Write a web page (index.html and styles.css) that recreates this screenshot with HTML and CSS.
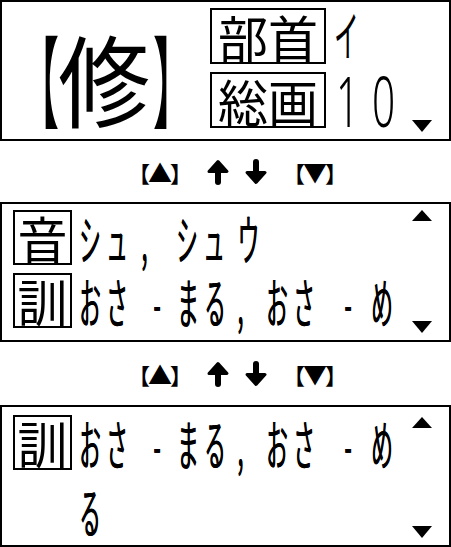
FILE: index.html
```html
<!DOCTYPE html>
<html lang="ja">
<head>
<meta charset="utf-8">
<title>修</title>
<link rel="stylesheet" href="styles.css">
</head>
<body>
<main class="screen">
  <section class="panel head">
    <div class="kanji">
      <span class="br br-open"><span class="br-glyph">【</span></span>
      <span class="big"><span class="big-glyph">修</span></span>
      <span class="br br-close"><span class="br-glyph">】</span></span>
    </div>
    <div class="info">
      <div class="info-row">
        <span class="tag tag-wide">部首</span>
        <span class="val radical">イ</span>
      </div>
      <div class="info-row">
        <span class="tag tag-wide">総画</span>
        <span class="val strokes">1 0</span>
      </div>
    </div>
    <div class="scroll scroll-head"><span class="tri tri-down"></span></div>
  </section>

  <div class="keys">
    <span class="key"><span class="kb">【</span><span class="kt"><span>▲</span></span><span class="kb">】</span></span>
    <svg class="arrow arrow-up" viewBox="0 0 24 26" width="24" height="26" aria-hidden="true"><path d="M12 23V10" fill="none" stroke="#000" stroke-width="6" stroke-linecap="round"/><path d="M12 2.5L21 12.5H3Z" fill="#000" stroke="#000" stroke-width="3" stroke-linejoin="round"/></svg>
    <svg class="arrow arrow-down" viewBox="0 0 24 26" width="24" height="26" aria-hidden="true"><path d="M12 3V16" fill="none" stroke="#000" stroke-width="6" stroke-linecap="round"/><path d="M12 23.5L21 13.5H3Z" fill="#000" stroke="#000" stroke-width="3" stroke-linejoin="round"/></svg>
    <span class="key"><span class="kb">【</span><span class="kt"><span>▼</span></span><span class="kb">】</span></span>
  </div>

  <section class="panel list">
    <div class="entries">
      <div class="entry">
        <span class="tag tag-sq">音</span>
        <span class="reading"><span>シュ</span><span class="sep comma-a">, </span><span>シュ</span><span class="kana-u">ウ</span></span>
      </div>
      <div class="entry">
        <span class="tag tag-sq">訓</span>
        <span class="reading"><span>おさ</span><span class="sep dash-a">-</span><span>まる</span><span class="sep comma-b">, </span><span>おさ</span><span class="sep dash-b">-</span><span>め</span></span>
      </div>
    </div>
    <div class="scroll"><span class="tri tri-up"></span><span class="tri tri-down"></span></div>
  </section>

  <div class="keys keys-low">
    <span class="key"><span class="kb">【</span><span class="kt"><span>▲</span></span><span class="kb">】</span></span>
    <svg class="arrow arrow-up" viewBox="0 0 24 26" width="24" height="26" aria-hidden="true"><path d="M12 23V10" fill="none" stroke="#000" stroke-width="6" stroke-linecap="round"/><path d="M12 2.5L21 12.5H3Z" fill="#000" stroke="#000" stroke-width="3" stroke-linejoin="round"/></svg>
    <svg class="arrow arrow-down" viewBox="0 0 24 26" width="24" height="26" aria-hidden="true"><path d="M12 3V16" fill="none" stroke="#000" stroke-width="6" stroke-linecap="round"/><path d="M12 23.5L21 13.5H3Z" fill="#000" stroke="#000" stroke-width="3" stroke-linejoin="round"/></svg>
    <span class="key"><span class="kb">【</span><span class="kt"><span>▼</span></span><span class="kb">】</span></span>
  </div>

  <section class="panel list list-last">
    <div class="entries entries-last">
      <div class="entry">
        <span class="tag tag-sq">訓</span>
        <span class="reading"><span>おさ</span><span class="sep dash-a">-</span><span>まる</span><span class="sep comma-b">, </span><span>おさ</span><span class="sep dash-b">-</span><span>め</span></span>
      </div>
      <div class="entry entry-cont">
        <span class="reading">る</span>
      </div>
    </div>
    <div class="scroll scroll-last"><span class="tri tri-up"></span><span class="tri tri-down"></span></div>
  </section>
</main>
</body>
</html>
```

FILE: styles.css
```css
* {
  box-sizing: border-box;
  margin: 0;
  padding: 0;
}

html, body {
  background: #fff;
}

body {
  width: 451px;
  height: 547px;
  overflow: hidden;
  color: #000;
  font-family: "Noto Sans CJK JP", "Noto Sans", sans-serif;
}

.screen {
  display: flex;
  flex-direction: column;
  width: 451px;
}

.panel {
  display: flex;
  border: 2px solid #000;
}

/* ---------- head panel ---------- */
.head {
  height: 141px;
  align-items: flex-start;
}

.kanji {
  display: flex;
  flex: none;
  margin: 25px 0 0 28px;
  height: 100px;
  font-size: 100px;
  line-height: 100px;
}

.br {
  display: flex;
  justify-content: center;
  width: 18px;
}

.br-glyph {
  display: inline-block;
  transform: scaleX(0.4);
}

.br-open {
  margin-right: 10px;
}

.br-close {
  margin-left: 14px;
}

.big {
  display: flex;
  justify-content: center;
  width: 92px;
}

.big-glyph {
  display: inline-block;
  transform: scaleX(0.92);
}

.info {
  display: flex;
  flex: none;
  flex-direction: column;
  gap: 8px;
  margin: 6px 0 0 28px;
}

.info-row {
  display: flex;
  align-items: flex-start;
  height: 56px;
}

.tag {
  display: block;
  flex: none;
  border: 2px solid #000;
  font-size: 50px;
  text-align: center;
  white-space: nowrap;
}

.tag-wide {
  width: 116px;
  height: 56px;
  line-height: 52px;
}

.val {
  display: block;
  width: 60px;
  white-space: nowrap;
  transform-origin: 0 50%;
}

.radical {
  margin-left: 8px;
  font-size: 54px;
  line-height: 52px;
  transform: scaleX(0.46);
}

.strokes {
  margin-left: 10px;
  font-family: "Noto Sans", sans-serif;
  font-weight: 300;
  font-size: 70px;
  line-height: 56px;
  word-spacing: 4px;
  transform: scaleX(0.58);
}

.scroll {
  display: flex;
  flex: none;
  flex-direction: column;
  justify-content: space-between;
  width: 20px;
  margin: 6px 17px 7px auto;
  align-self: stretch;
}

.scroll-head {
  justify-content: flex-end;
}

.scroll-last {
  margin-top: 10px;
}

.tri {
  display: block;
  width: 0;
  height: 0;
  border-left: 10px solid transparent;
  border-right: 10px solid transparent;
}

.tri-up {
  border-bottom: 11px solid #000;
}

.tri-down {
  border-top: 12px solid #000;
}

/* ---------- key hint rows ---------- */
.keys {
  display: flex;
  align-items: center;
  height: 61px;
  padding-left: 128px;
}

.keys-low {
  height: 63px;
}

.key {
  display: flex;
  align-items: center;
  height: 24px;
  font-size: 22px;
  line-height: 24px;
  font-weight: 700;
  white-space: nowrap;
}

.kb {
  display: block;
  width: 22px;
}

.kt {
  display: flex;
  justify-content: center;
  width: 20px;
  font-size: 24px;
}

.arrow {
  display: block;
  flex: none;
}

.arrow-up {
  margin-left: 14px;
}

.arrow-down {
  margin-left: 14px;
  margin-right: 15px;
}

/* ---------- reading panels ---------- */
.list {
  height: 140px;
}

.list-last {
  height: 142px;
}

.entries {
  flex: 1;
  min-width: 0;
  display: flex;
  flex-direction: column;
  gap: 8px;
  padding: 6px 0 0 11px;
}

.entries-last {
  padding-top: 8px;
  gap: 13px;
}

.entry {
  display: flex;
  align-items: center;
  height: 55px;
}

.tag-sq {
  width: 59px;
  height: 55px;
  line-height: 51px;
}

.reading {
  display: block;
  width: 330px;
  margin-left: 6.7px;
  font-size: 54px;
  line-height: 54px;
  letter-spacing: 13.5px;
  white-space: nowrap;
  text-shadow: 1px 0 0 #000;
  transform: scaleX(0.4);
  transform-origin: 0 50%;
}

.entry-cont .reading {
  margin-left: 65.7px;
}

.sep {
  display: inline-block;
  white-space: pre;
  letter-spacing: 0;
}

.comma-a {
  width: 107.5px;
  padding-left: 20.8px;
}

.dash-a {
  width: 110px;
  padding-left: 50.5px;
}

.comma-b {
  width: 87.5px;
  padding-left: 15.8px;
}

.dash-b {
  width: 127.5px;
  padding-left: 60.5px;
}

.kana-u {
  margin-left: 19px;
}
```
